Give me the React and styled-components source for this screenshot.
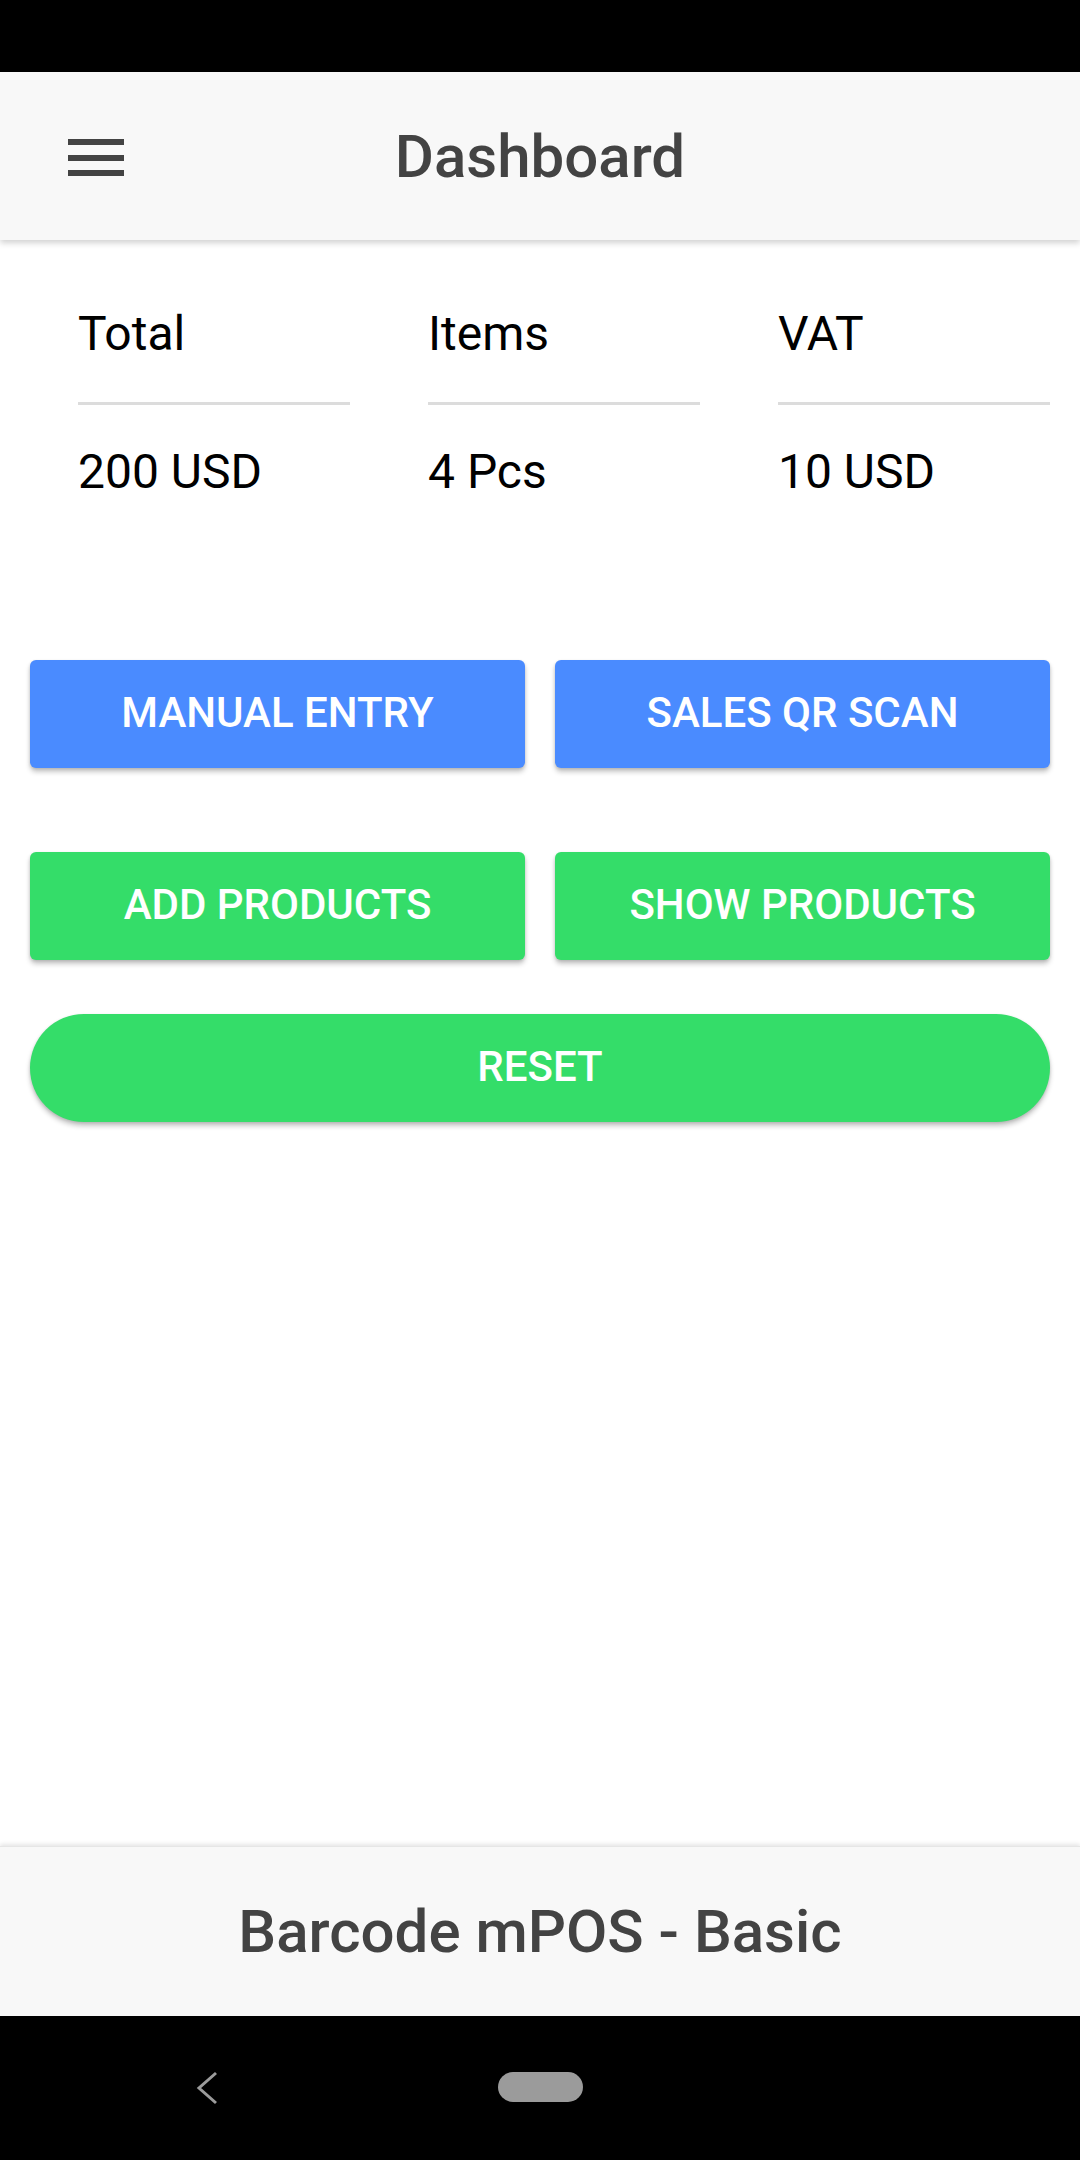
import React from "react";
import styled, { createGlobalStyle } from "styled-components";

const Global = createGlobalStyle`
  html, body { margin: 0; padding: 0; background: #ffffff; }
  body { font-family: Roboto, "Noto Sans", "Liberation Sans", sans-serif; }
  * { box-sizing: border-box; }
`;

const Screen = styled.div`
  width: 1080px;
  height: 2160px;
  display: flex;
  flex-direction: column;
  background: #ffffff;
  overflow: hidden;
`;

const StatusBar = styled.div`
  height: 72px;
  flex: none;
  background: #000000;
`;

const Header = styled.header`
  position: relative;
  z-index: 2;
  height: 168px;
  flex: none;
  background: #f8f8f8;
  box-shadow: 0 3px 6px rgba(0, 0, 0, 0.18);
  display: flex;
  align-items: center;
  justify-content: center;
`;

const MenuButton = styled.button`
  position: absolute;
  left: 60px;
  top: 50px;
  width: 72px;
  height: 72px;
  padding: 0;
  border: 0;
  background: transparent;
  display: flex;
  align-items: center;
  justify-content: center;
`;

const Title = styled.h1`
  margin: 0;
  padding-top: 2px;
  font-family: Roboto, "Liberation Sans", sans-serif;
  font-weight: 500;
  font-size: 60px;
  color: #434343;
  line-height: 1;
`;

const Main = styled.main`
  flex: 1;
  display: flex;
  flex-direction: column;
  padding: 0 30px;
`;

const Stats = styled.section`
  display: grid;
  grid-template-columns: repeat(3, 272px);
  column-gap: 78px;
  padding: 66px 0 0 48px;
`;

const Stat = styled.div`
  display: flex;
  flex-direction: column;
`;

const StatText = styled.div`
  font-family: Roboto, "Liberation Sans", sans-serif;
  font-size: 48px;
  line-height: 56px;
  color: #000000;
  white-space: nowrap;
`;

const Divider = styled.div`
  height: 3px;
  background: #dcdcdc;
  margin: ${(p) => p.$top}px 0 ${(p) => p.$bottom}px;
`;

const Actions = styled.section`
  display: flex;
  flex-direction: column;
  margin-top: 160px;
`;

const ButtonRow = styled.div`
  display: grid;
  grid-template-columns: 1fr 1fr;
  column-gap: 30px;
  margin-bottom: ${(p) => p.$gap}px;
`;

const ActionButton = styled.button`
  height: 108px;
  border: 0;
  border-radius: ${(p) => (p.$pill ? "54px" : "6px")};
  background: ${(p) => (p.$tone === "blue" ? "#4a8bff" : "#34dd69")};
  color: #ffffff;
  font-family: Roboto, "Liberation Sans", sans-serif;
  font-weight: 500;
  font-size: 42px;
  letter-spacing: 0;
  text-transform: uppercase;
  box-shadow: 0 4px 5px rgba(0, 0, 0, 0.22), 0 1px 3px rgba(0, 0, 0, 0.12);
  display: flex;
  align-items: center;
  justify-content: center;
  padding: 0 0 4px;
`;

const Footer = styled.footer`
  height: 170px;
  flex: none;
  background: #f8f8f8;
  box-shadow: 0 -2px 4px rgba(0, 0, 0, 0.1);
  border-top: 1px solid #e6e6e6;
  display: flex;
  align-items: center;
  justify-content: center;
`;

const FooterTitle = styled.div`
  font-family: Roboto, "Liberation Sans", sans-serif;
  font-weight: 500;
  font-size: 60px;
  color: #434343;
  line-height: 1;
`;

const NavBar = styled.nav`
  height: 144px;
  flex: none;
  background: #000000;
  position: relative;
  display: flex;
  align-items: center;
  justify-content: center;
`;

const BackIcon = styled.svg`
  position: absolute;
  left: 190px;
  top: 55px;
`;

const HomePill = styled.div`
  width: 85px;
  height: 30px;
  border-radius: 15px;
  background: #9b9b9b;
  margin-top: -2px;
`;

const stats = [
  { label: "Total", value: "200 USD" },
  { label: "Items", value: "4 Pcs" },
  { label: "VAT", value: "10 USD" },
];

export default function App() {
  return (
    <>
      <Global />
      <Screen>
        <StatusBar />
        <Header>
          <MenuButton aria-label="menu">
            <svg width="56" height="38" viewBox="0 0 56 38">
              <rect x="0" y="0" width="56" height="6" fill="#434343" />
              <rect x="0" y="16" width="56" height="6" fill="#434343" />
              <rect x="0" y="31" width="56" height="6" fill="#434343" />
            </svg>
          </MenuButton>
          <Title>Dashboard</Title>
        </Header>
        <Main>
          <Stats>
            {stats.map((s) => (
              <Stat key={s.label}>
                <StatText>{s.label}</StatText>
                <Divider $top={40} $bottom={39} />
                <StatText>{s.value}</StatText>
              </Stat>
            ))}
          </Stats>
          <Actions>
            <ButtonRow $gap={84}>
              <ActionButton $tone="blue">Manual Entry</ActionButton>
              <ActionButton $tone="blue">Sales QR Scan</ActionButton>
            </ButtonRow>
            <ButtonRow $gap={54}>
              <ActionButton $tone="green">Add Products</ActionButton>
              <ActionButton $tone="green">Show Products</ActionButton>
            </ButtonRow>
            <ActionButton $tone="green" $pill>
              Reset
            </ActionButton>
          </Actions>
        </Main>
        <Footer>
          <FooterTitle>Barcode mPOS - Basic</FooterTitle>
        </Footer>
        <NavBar>
          <BackIcon width="30" height="34" viewBox="0 0 30 34">
            <polyline
              points="26,2 9,17 26,32"
              fill="none"
              stroke="#9b9b9b"
              strokeWidth="3"
            />
          </BackIcon>
          <HomePill />
        </NavBar>
      </Screen>
    </>
  );
}
